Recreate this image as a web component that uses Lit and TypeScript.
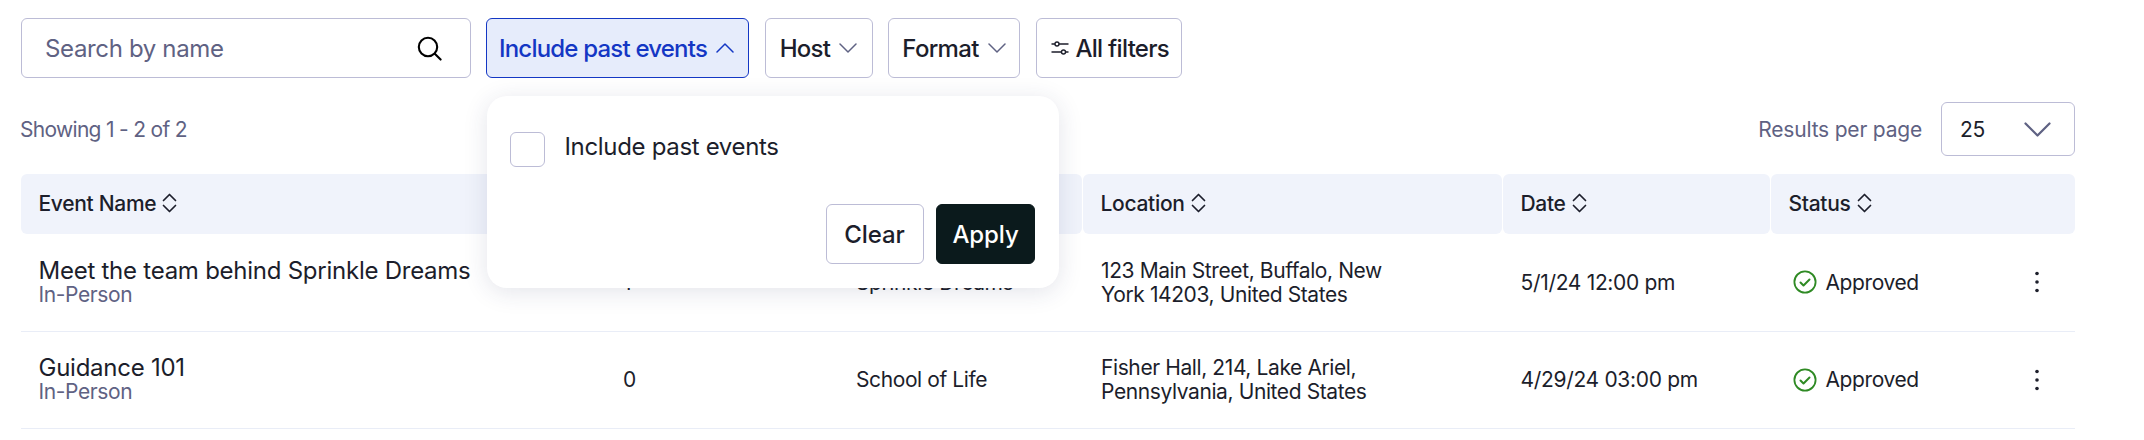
import { LitElement, html, css } from "lit";
import { customElement } from "lit/decorators.js";

const chevDown = (cls = "chev") => html`<svg class=${cls} viewBox="0 0 18 10" fill="none" stroke="currentColor" stroke-width="1.5" stroke-linecap="round" stroke-linejoin="round"><path d="M1 1l8 8 8-8"/></svg>`;
const chevUp = html`<svg class="chev" viewBox="0 0 18 10" fill="none" stroke="currentColor" stroke-width="1.5" stroke-linecap="round" stroke-linejoin="round"><path d="M1 9l8-8 8 8"/></svg>`;
const sort = html`<svg class="sort" viewBox="0 0 15 22" fill="none" stroke="currentColor" stroke-width="1.7" stroke-linecap="round" stroke-linejoin="round"><path d="M1.5 8.5l6-6 6 6M1.5 13.5l6 6 6-6"/></svg>`;
const check = html`<svg class="check" viewBox="0 0 24 24" fill="none" stroke="#2f8a24" stroke-width="1.8" stroke-linecap="round" stroke-linejoin="round"><circle cx="12" cy="12" r="10.6"/><path d="M7.5 12.5l3 3 6-6" stroke-width="2"/></svg>`;
const kebab = html`<svg class="kebab" viewBox="0 0 6 22" fill="#1d1f2b"><circle cx="3" cy="2.5" r="1.8"/><circle cx="3" cy="11" r="1.8"/><circle cx="3" cy="19.5" r="1.8"/></svg>`;

interface Row { name: string; format: string; count: string; host: string; loc: string[]; date: string; status: string; }
const rows: Row[] = [
  { name: "Meet the team behind Sprinkle Dreams", format: "In-Person", count: "1", host: "Sprinkle Dreams", loc: ["123 Main Street, Buffalo, New", "York 14203, United States"], date: "5/1/24 12:00 pm", status: "Approved" },
  { name: "Guidance 101", format: "In-Person", count: "0", host: "School of Life", loc: ["Fisher Hall, 214, Lake Ariel,", "Pennsylvania, United States"], date: "4/29/24 03:00 pm", status: "Approved" },
];
const cols = ["Event Name", "Registrations", "Host", "Location", "Date", "Status"];

@customElement("app-root")
export class AppRoot extends LitElement {
  static styles = css`
    :host { display: block; box-sizing: border-box; width: 2144px; height: 440px; padding: 18px 69px 0 21px; background: #fff; font-family: Inter, "Liberation Sans", sans-serif; color: #1c1e2b; overflow: hidden; letter-spacing: -0.2px; }
    * { box-sizing: border-box; }
    .filters { display: flex; gap: 15.5px; height: 60px; position: relative; }
    .search { width: 450px; border: 1.5px solid #bcbcd6; border-radius: 6px; display: flex; align-items: center; justify-content: space-between; padding: 0 28px 0 23px; font-size: 24px; letter-spacing: -0.35px; color: #5f6283; }
    .search svg { width: 25px; height: 25px; }
    .btn { border: 1.5px solid #bcbcd6; border-radius: 6px; display: flex; align-items: center; justify-content: center; gap: 9px; font-size: 24px; letter-spacing: -0.7px; font-weight: 500; background: #fff; color: #1c1e2b; white-space: nowrap; }
    .btn.active { background: #e6ecfb; border-color: #1437c4; color: #1437c4; width: 263px; margin-left: -0.5px; letter-spacing: -0.8px; padding-right: 2px; }
    .w-host { width: 108px; } .w-format { width: 132px; } .w-all { width: 146.5px; gap: 6px; padding-left: 3px; }
    .chev { width: 18px; height: 10px; color: #5f6283; }
    .active .chev { color: #1437c4; }
    .sliders { width: 18px; height: 18px; }
    .popup { position: absolute; left: 465.5px; top: 78px; width: 572.5px; height: 192px; background: #fff; border-radius: 20px; box-shadow: 0 4px 24px rgba(40, 45, 90, 0.13); padding: 36px 24px 24px 23.5px; display: flex; flex-direction: column; justify-content: space-between; z-index: 5; }
    .opt { display: flex; gap: 19.5px; align-items: flex-start; font-size: 24px; letter-spacing: -0.33px; }
    .box { width: 35px; height: 35px; border: 1.5px solid #bcbcd6; border-radius: 6px; flex: none; }
    .opt span { line-height: 30px; }
    .acts { display: flex; justify-content: flex-end; gap: 12.5px; }
    .acts .btn { height: 60px; letter-spacing: -0.1px; }
    .clear { width: 98px; }
    .apply { width: 99px; background: #0b1a1c; color: #fff; border-color: #0b1a1c; }
    .meta { display: flex; align-items: center; justify-content: space-between; margin-top: 24px; height: 54px; font-size: 21px; color: #5f6283; }
    .showing { letter-spacing: -0.7px; margin-left: -1px; }
    .rpp { display: flex; align-items: center; gap: 19px; }
    .select { width: 134px; height: 54px; border: 1.5px solid #bcbcd6; border-radius: 6px; display: flex; align-items: center; justify-content: space-between; padding: 0 23px 0 18px; color: #1c1e2b; font-size: 21px; }
    .select .big { width: 27px; height: 15px; color: #5f6283; }
    .table { margin-top: 18px; }
    .row { display: grid; grid-template-columns: 584px 233px 245px 420px 268px 304px; }
    .head .cell { height: 60px; background: #f0f3fb; border-radius: 6px; margin-right: 1px; display: flex; align-items: center; gap: 6px; font-size: 21px; letter-spacing: -0.3px; font-weight: 500; padding: 0 0 2px 17.5px; }
    .head .cell:last-child { margin-right: 0; }
    .sort { width: 15px; height: 22px; }
    .body { height: 97.5px; border-bottom: 1.5px solid #e9edf7; font-size: 21px; letter-spacing: -0.4px; }
    .td { display: flex; align-items: center; padding-left: 18px; }
    .td.first { padding-left: 17.5px; }
    .date { padding-left: 17.5px; letter-spacing: -0.32px; }
    .stack { display: flex; flex-direction: column; line-height: 24px; padding-top: 1px; }
    .name { font-size: 24px; letter-spacing: -0.25px; }
    .sub { color: #5f6283; }
    .st { padding-left: 22px; padding-right: 35.5px; justify-content: space-between; }
    .badge { display: flex; align-items: center; gap: 8.5px; }
    .check { width: 24px; height: 24px; }
    .kebab { width: 6px; height: 22px; }
  `;

  render() {
    return html`
      <div class="filters">
        <div class="search">Search by name
          <svg viewBox="0 0 25 25" fill="none" stroke="#000" stroke-width="2.1" stroke-linecap="round"><circle cx="11" cy="11" r="9.2"/><path d="M17.8 17.8L23.6 23.6"/></svg>
        </div>
        <div class="btn active">Include past events ${chevUp}</div>
        <div class="btn w-host">Host ${chevDown()}</div>
        <div class="btn w-format">Format ${chevDown()}</div>
        <div class="btn w-all">
          <svg class="sliders" viewBox="0 0 18 18" fill="none" stroke="#1c1e2b" stroke-width="1.4"><path d="M0.5 5h3.5M8 5h9.5M0.5 13h10M14.5 13h3"/><circle cx="6" cy="5" r="2"/><circle cx="12.5" cy="13" r="2"/></svg>
          All filters
        </div>
        <div class="popup">
          <div class="opt"><div class="box"></div><span>Include past events</span></div>
          <div class="acts"><div class="btn clear">Clear</div><div class="btn apply">Apply</div></div>
        </div>
      </div>
      <div class="meta">
        <div class="showing">Showing 1 - 2 of 2</div>
        <div class="rpp">Results per page <div class="select">25 ${chevDown("big")}</div></div>
      </div>
      <div class="table">
        <div class="row head">${cols.map((c) => html`<div class="cell">${c} ${sort}</div>`)}</div>
        ${rows.map((r) => html`
          <div class="row body">
            <div class="td first"><div class="stack"><span class="name">${r.name}</span><span class="sub">${r.format}</span></div></div>
            <div class="td">${r.count}</div>
            <div class="td">${r.host}</div>
            <div class="td"><div class="stack">${r.loc.map((l) => html`<span>${l}</span>`)}</div></div>
            <div class="td date">${r.date}</div>
            <div class="td st"><div class="badge">${check}${r.status}</div>${kebab}</div>
          </div>`)}
      </div>
    `;
  }
}
